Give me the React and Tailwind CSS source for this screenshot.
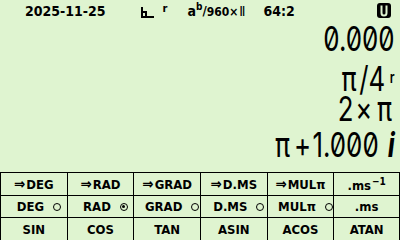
import React from 'react';

const conversions = ['⇒DEG', '⇒RAD', '⇒GRAD', '⇒D.MS', '⇒MULπ'];

function Dot({ on }) {
    return (
        <span className="inline-flex w-[8px] h-[8px] rounded-full border border-black items-center justify-center">
            {on && <span className="w-[3px] h-[3px] rounded-full bg-black" />}
        </span>
    );
}

function Pi() {
    return <span className="inline-block w-[27px] text-center font-['DejaVu_Sans',sans-serif]">π</span>;
}

export default function App() {
    const modes = [
        { label: 'DEG', dot: true, on: false },
        { label: 'RAD', dot: true, on: true },
        { label: 'GRAD', dot: true, on: false },
        { label: 'D.MS', dot: true, on: false },
        { label: 'MULπ', dot: true, on: false },
        { label: '.ms', dot: false },
    ];
    const funcs = ['SIN', 'COS', 'TAN', 'ASIN', 'ACOS', 'ATAN'];

    return (
        <div className="w-[400px] h-[240px] bg-[#dff4d0] text-black overflow-hidden flex flex-col">
            {/* header */}
            <div className="h-[23px] shrink-0 flex items-start pt-[3px] font-['DejaVu_Sans_Condensed','DejaVu_Sans',sans-serif] font-bold text-[14px] leading-[16px]">
                <span className="ml-[25px]">2025-11-25</span>
                <svg className="ml-[35px] mt-[4px]" width="13" height="11" viewBox="0 0 13 11">
                    <path d="M1 0 V10 H13 M1 5 H5 V10" stroke="black" strokeWidth="2" fill="none" />
                </svg>
                <span className="ml-[9px] text-[11px] leading-[12px]">r</span>
                <span className="ml-[20px] flex items-start">
                    <span>a</span>
                    <span className="text-[10px] leading-[10px] -mt-[1px]">b</span>
                    <span className="text-[13px]">/</span>
                    <span className="text-[12px] leading-[18px]">960×</span>
                    <span className="text-[14px] leading-[17px] font-normal ml-[1px]">Ⅱ</span>
                </span>
                <span className="ml-[18px]">64:2</span>
                <svg className="ml-auto mr-[9px]" width="14" height="15" viewBox="0 0 14 15">
                    <rect x="0" y="0" width="14" height="15" rx="3" fill="black" />
                    <path d="M4.5 2.5 V10 Q4.5 12.5 7 12.5 Q9.5 12.5 9.5 10 V2.5" stroke="#dff4d0" strokeWidth="2" fill="none" />
                </svg>
            </div>

            {/* stack */}
            <div className="flex-1 flex flex-col items-end pr-[7px] origin-right scale-x-[0.76] font-['Inter',sans-serif] text-[34px] leading-[28px] slashed-zero">
                <div className="h-[40px] pt-[2px]">0.000</div>
                <div className="h-[30px] pt-[2px] flex items-start">
                    <Pi />
                    <span>/4</span>
                    <span className="text-[16px] leading-none font-semibold ml-[6px] mt-[4px]">r</span>
                </div>
                <div className="h-[36px] pt-[2px]">
                    2<span className="inline-block w-[27px] text-center">×</span><Pi />
                </div>
                <div className="h-[43px] pt-[2px]">
                    <Pi />
                    <span className="inline-block w-[26px] text-center">+</span>
                    1.000
                    <span className="inline-block w-[21px] text-right italic font-bold">i</span>
                </div>
            </div>

            {/* menu */}
            <div className="h-[68px] shrink-0 border-t border-black grid grid-cols-6 grid-rows-[23px_22px_23px] font-['DejaVu_Sans_Condensed','DejaVu_Sans',sans-serif] font-bold text-[13px] leading-none">
                {conversions.map((m) => (
                    <div key={m} className="flex items-center justify-center border-l border-b border-black">
                        <span className="text-[15px] mr-[1px]">{m[0]}</span>
                        <span>{m.slice(1)}</span>
                    </div>
                ))}
                <div className="flex items-start justify-center pt-[5px] border-l border-r border-b border-black">
                    <span className="mt-[1px]">.ms</span>
                    <span className="text-[10px] leading-[10px] ml-[1px] -mt-[1px]">−1</span>
                </div>
                {modes.map((m, i) => (
                    <div key={m.label} className={`flex items-center justify-center border-l border-b border-black ${m.dot ? 'gap-[9px] pl-[10px]' : ''} ${i === 5 ? 'border-r' : ''}`}>
                        <span>{m.label}</span>
                        {m.dot && <Dot on={m.on} />}
                    </div>
                ))}
                {funcs.map((f, i) => (
                    <div key={f} className={`flex items-center justify-center border-l border-black ${i === 5 ? 'border-r' : ''}`}>
                        {f}
                    </div>
                ))}
            </div>
        </div>
    );
}
